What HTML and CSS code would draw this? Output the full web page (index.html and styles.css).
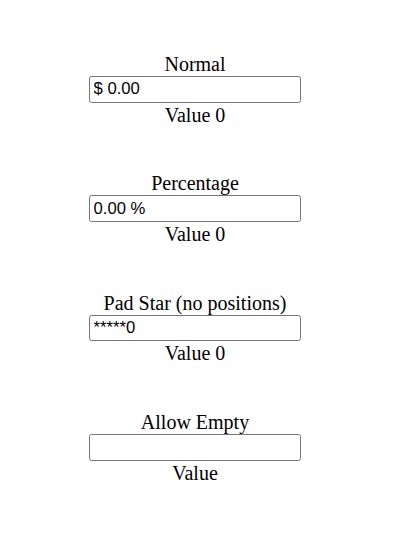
FILE: index.html
```html
<!DOCTYPE html>
<html>
<head>
<meta charset="utf-8">
<link rel="stylesheet" href="styles.css">
</head>
<body>
<div class="page">
  <div class="field">
    <div class="label">Normal</div>
    <input class="num" type="text" value="$ 0.00">
    <div class="value">Value 0</div>
  </div>
  <div class="field">
    <div class="label">Percentage</div>
    <input class="num" type="text" value="0.00 %">
    <div class="value">Value 0</div>
  </div>
  <div class="field">
    <div class="label">Pad Star (no positions)</div>
    <input class="num" type="text" value="*****0">
    <div class="value">Value 0</div>
  </div>
  <div class="field">
    <div class="label">Allow Empty</div>
    <input class="num" type="text" value="">
    <div class="value">Value</div>
  </div>
</div>
</body>
</html>
```
FILE: styles.css
```css
html, body {
  margin: 0;
  padding: 0;
  background: #fff;
}
body {
  font-family: "Liberation Serif", "Times New Roman", serif;
  font-size: 20px;
  color: #000;
}
.page {
  width: 370px;
  padding: 53px 0 0 10px;
  display: flex;
  flex-direction: column;
  gap: 45.67px;
}
.field {
  display: flex;
  flex-direction: column;
  align-items: center;
}
.label, .value {
  line-height: 23px;
  height: 23px;
  white-space: nowrap;
}
.value {
  padding-top: 1px;
}
.num {
  box-sizing: border-box;
  width: 212px;
  height: 26.67px;
  margin: 0;
  padding: 1px 3.5px;
  border: 1px solid #767676;
  border-radius: 2.5px;
  font-family: "Liberation Sans", Arial, sans-serif;
  font-size: 16.67px;
  color: #000;
  background: #fff;
  outline: none;
}
```
